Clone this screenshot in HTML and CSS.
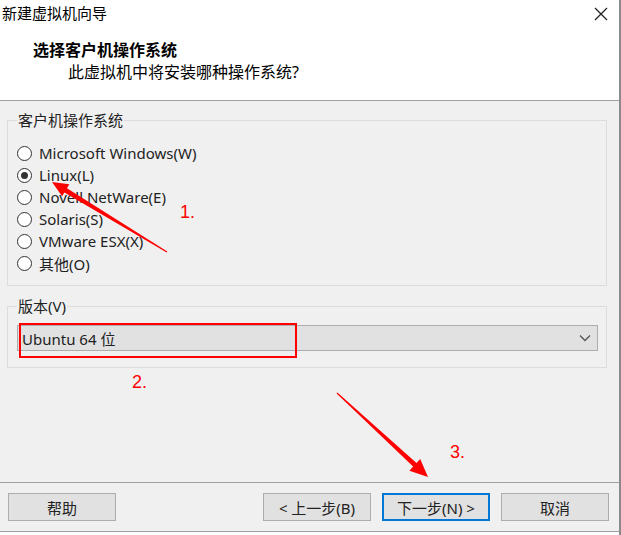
FILE: index.html
```html
<!DOCTYPE html>
<html lang="zh-CN">

<head>
    <meta charset="UTF-8">
    <meta name="viewport" content="width=device-width, initial-scale=1.0">
    <title>新建虚拟机向导</title>
    <link rel="stylesheet" href="styles.css">
</head>

<body>
    <div class="window">
        <header class="header">
            <div class="titlebar">
                <span class="title">新建虚拟机向导</span>
                <svg class="close-btn" width="14" height="14" viewBox="0 0 14 14">
                    <path d="M1 1 L13 13 M13 1 L1 13" stroke="#222" stroke-width="1.3" fill="none" />
                </svg>
            </div>
            <h1 class="heading">选择客户机操作系统</h1>
            <p class="subheading">此虚拟机中将安装哪种操作系统?</p>
        </header>

        <main class="content">
            <fieldset class="group os-group">
                <legend>客户机操作系统</legend>
                <label class="option"><span class="radio"></span>Microsoft Windows(W)</label>
                <label class="option"><span class="radio checked"></span>Linux(L)</label>
                <label class="option"><span class="radio"></span>Novell NetWare(E)</label>
                <label class="option"><span class="radio"></span>Solaris(S)</label>
                <label class="option"><span class="radio"></span>VMware ESX(X)</label>
                <label class="option"><span class="radio"></span>其他(O)</label>
            </fieldset>

            <fieldset class="group version-group">
                <legend>版本(V)</legend>
                <div class="combo">
                    <span>Ubuntu 64 位</span>
                    <svg class="chevron" width="12" height="8" viewBox="0 0 12 8">
                        <path d="M1 1.5 L6 6.5 L11 1.5" stroke="#555" stroke-width="1.3" fill="none" />
                    </svg>
                </div>
            </fieldset>
        </main>

        <footer class="footer">
            <button class="btn">帮助</button>
            <div class="nav-btns">
                <button class="btn">&lt; 上一步(B)</button>
                <button class="btn btn-default">下一步(N) &gt;</button>
                <button class="btn">取消</button>
            </div>
        </footer>
        <div class="bottom-strip"></div>

        <!-- red notes drawn on top of the screenshot -->
        <svg class="notes" width="621" height="535" viewBox="0 0 621 535">
            <polygon fill="#ff0000"
                points="52,182 69.3,184.3 67,188.2 167.3,251.6 166.7,252.4 64.4,192.4 62.1,196.3" />
            <rect x="20" y="324" width="276" height="33" fill="none" stroke="#ff0000" stroke-width="2" />
            <polygon fill="#ff0000"
                points="428,477 420.2,458.9 416.5,463 337.4,392.6 336.6,393.4 413.1,466.6 409.4,470.7" />
            <text class="note-num" x="180" y="218">1.</text>
            <text class="note-num" x="132" y="388">2.</text>
            <text class="note-num" x="450" y="458">3.</text>
        </svg>
    </div>
</body>

</html>
```

FILE: styles.css
```css
body {
    margin: 0;
    padding: 0;
    background-color: #ffffff;
    font-family: "Noto Sans", "Noto Sans CJK SC", sans-serif;
    font-size: 15px;
    color: #000000;
}

.window {
    position: relative;
    width: 621px;
    height: 535px;
    box-sizing: border-box;
    border-right: 2px solid #8a8a8a;
    background-color: #f0f0f0;
    display: flex;
    flex-direction: column;
    overflow: hidden;
}

.header {
    height: 100px;
    background-color: #ffffff;
    border-bottom: 1px solid #a0a0a0;
}

.titlebar {
    height: 27px;
    display: flex;
    align-items: center;
    justify-content: space-between;
    padding: 0 11px 0 2px;
}

.title {
    line-height: 27px;
}

.heading {
    margin: 12px 0 0 33px;
    font-size: 16px;
    font-weight: bold;
    line-height: 22px;
}

.subheading {
    margin: 0 0 0 68px;
    font-size: 16px;
    line-height: 22px;
}

.content {
    flex: 1;
}

.group {
    margin: 9px 12px 0 7px;
    border: 1px solid #dcdcdc;
    padding: 0 8px 0 9px;
}

.group legend {
    padding: 0 1px;
    line-height: 20px;
    color: #222;
}

.os-group {
    padding-top: 12px;
    padding-bottom: 11px;
}

.option {
    display: flex;
    align-items: center;
    height: 22px;
    color: #222;
}

.radio {
    width: 13px;
    height: 13px;
    border: 1px solid #333;
    border-radius: 50%;
    background-color: #ffffff;
    margin-right: 7px;
    display: flex;
    align-items: center;
    justify-content: center;
}

.radio.checked::after {
    content: "";
    width: 7px;
    height: 7px;
    border-radius: 50%;
    background-color: #333;
}

.version-group {
    margin-top: 10px;
    padding-top: 9px;
    padding-bottom: 16px;
}

.combo {
    height: 24px;
    border: 1px solid #adadad;
    background-color: #e1e1e1;
    display: flex;
    align-items: center;
    justify-content: space-between;
    padding: 0 6px 0 4px;
    color: #222;
}

.footer {
    height: 48px;
    border-top: 1px solid #a0a0a0;
    border-bottom: 1px solid #a0a0a0;
    display: flex;
    align-items: center;
    justify-content: space-between;
    padding: 0 10px 0 8px;
}

.nav-btns {
    display: flex;
    gap: 11px;
}

.btn {
    width: 108px;
    height: 28px;
    font-family: inherit;
    font-size: 15px;
    color: #222;
    background-color: #e1e1e1;
    border: 1px solid #adadad;
    padding: 0;
}

.btn-default {
    border: 2px solid #0078d7;
}

.bottom-strip {
    height: 3px;
    background-color: #ffffff;
}

.notes {
    position: absolute;
    left: 0;
    top: 0;
    pointer-events: none;
}

.note-num {
    font-family: "Liberation Sans", sans-serif;
    font-size: 18px;
    fill: #ff0000;
}
```
